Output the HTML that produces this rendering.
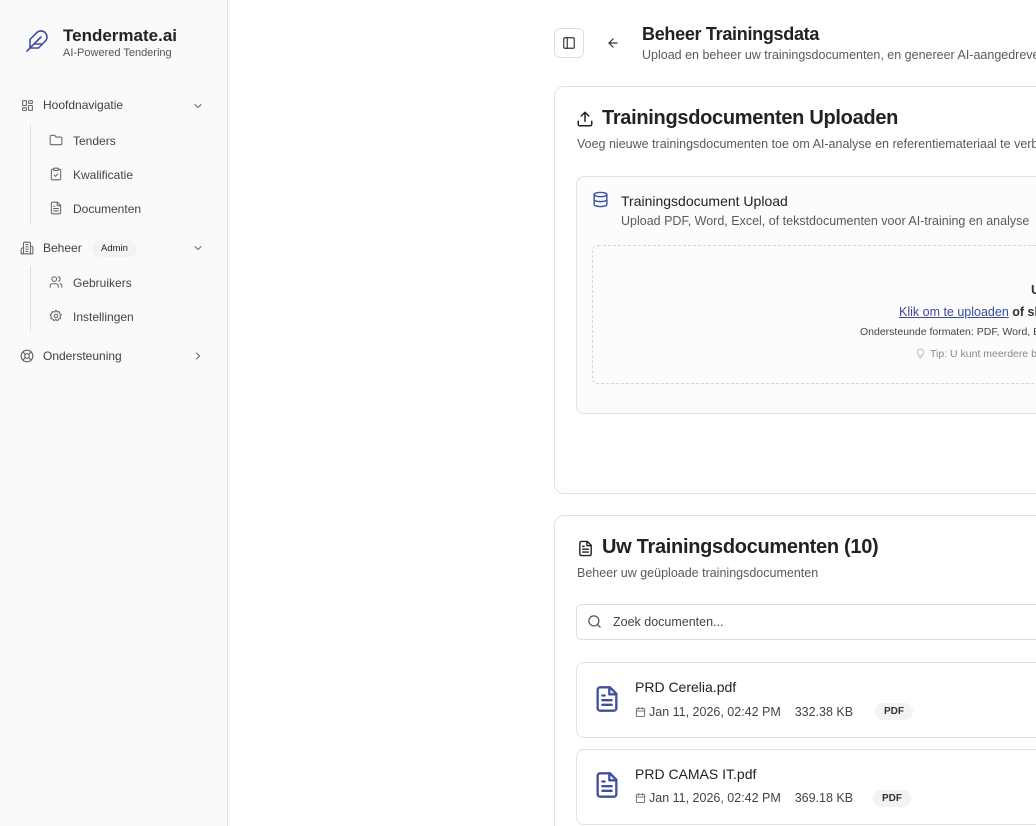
<!DOCTYPE html>
<html style="width:1036px;height:826px;overflow:hidden"><head><meta charset="utf-8"><style>
*{box-sizing:border-box;margin:0;padding:0}
body{width:1036px;height:826px;overflow:hidden;background:#fff;font-family:"Liberation Sans",sans-serif;color:#1f1f1f;position:relative}
.abs{position:absolute;white-space:nowrap}
.side{position:absolute;left:0;top:0;width:228px;height:826px;background:#fafafa;border-right:1px solid #e5e5e5}
.nav{font-size:12px;color:#3f3f3f}
.sub{font-size:12px;color:#444}
svg{position:absolute;fill:none;stroke-linecap:round;stroke-linejoin:round}
.card{position:absolute;border:1px solid #e2e2e2;border-radius:10px;background:#fff}
.muted{color:#5a5a5a}
.badge{position:absolute;background:#f3f3f3;border-radius:10px;font-size:10px;font-weight:bold;color:#333;padding:3px 9px}
</style></head><body>
<div class="side">
<svg style="left:25px;top:29px" width="24" height="24" viewBox="0 0 24 24" stroke="#4050a0" stroke-width="1.6"><path d="M20.2 12.2a6 6 0 0 0-8.5-8.5L5 10.5V19h8.5z"/><path d="M16 8 2 22"/><path d="M17.5 15H9"/></svg>
<div class="abs" style="left:63px;top:26px;font-size:17px;font-weight:bold;color:#222">Tendermate.ai</div>
<div class="abs" style="left:63px;top:47px;font-size:11px;color:#555">AI-Powered Tendering</div>

<svg style="left:21px;top:99px" width="13" height="13" viewBox="0 0 24 24" stroke="#666" stroke-width="2"><rect x="3" y="3" width="7" height="9" rx="1"/><rect x="14" y="3" width="7" height="5" rx="1"/><rect x="14" y="12" width="7" height="9" rx="1"/><rect x="3" y="16" width="7" height="5" rx="1"/></svg>
<div class="abs nav" style="left:43px;top:98px">Hoofdnavigatie</div>
<svg style="left:192px;top:100px" width="12" height="12" viewBox="0 0 24 24" stroke="#666" stroke-width="2"><path d="m6 9 6 6 6-6"/></svg>
<div style="position:absolute;left:30px;top:124px;width:1px;height:100px;background:#ddd"></div>
<svg style="left:49px;top:133px" width="14" height="14" viewBox="0 0 24 24" stroke="#666" stroke-width="1.8"><path d="M4 20h16a2 2 0 0 0 2-2V9a2 2 0 0 0-2-2h-8L10 4H4a2 2 0 0 0-2 2v12a2 2 0 0 0 2 2z"/></svg>
<div class="abs sub" style="left:73px;top:134px">Tenders</div>
<svg style="left:49px;top:167px" width="14" height="14" viewBox="0 0 24 24" stroke="#666" stroke-width="1.8"><rect x="8" y="2" width="8" height="4" rx="1"/><path d="M16 4h2a2 2 0 0 1 2 2v14a2 2 0 0 1-2 2H6a2 2 0 0 1-2-2V6a2 2 0 0 1 2-2h2"/><path d="m9 14 2 2 4-4"/></svg>
<div class="abs sub" style="left:73px;top:168px">Kwalificatie</div>
<svg style="left:49px;top:201px" width="14" height="14" viewBox="0 0 24 24" stroke="#666" stroke-width="1.8"><path d="M14.5 2H6a2 2 0 0 0-2 2v16a2 2 0 0 0 2 2h12a2 2 0 0 0 2-2V7.5z"/><path d="M14 2v6h6M16 13H8M16 17H8M10 9H8"/></svg>
<div class="abs sub" style="left:73px;top:202px">Documenten</div>

<svg style="left:20px;top:241px" width="14" height="14" viewBox="0 0 24 24" stroke="#666" stroke-width="1.8"><path d="M6 22V4a2 2 0 0 1 2-2h8a2 2 0 0 1 2 2v18z"/><path d="M6 12H4a2 2 0 0 0-2 2v8h4M18 9h2a2 2 0 0 1 2 2v11h-4M10 6h4M10 10h4M10 14h4M10 18h4"/></svg>
<div class="abs nav" style="left:43px;top:241px">Beheer</div>
<div class="badge" style="left:92px;top:240px;font-weight:normal;color:#222;font-size:9.5px">Admin</div>
<svg style="left:192px;top:242px" width="12" height="12" viewBox="0 0 24 24" stroke="#666" stroke-width="2"><path d="m6 9 6 6 6-6"/></svg>
<div style="position:absolute;left:30px;top:266px;width:1px;height:66px;background:#ddd"></div>
<svg style="left:49px;top:275px" width="14" height="14" viewBox="0 0 24 24" stroke="#666" stroke-width="1.8"><path d="M16 21v-2a4 4 0 0 0-4-4H6a4 4 0 0 0-4 4v2"/><circle cx="9" cy="7" r="4"/><path d="M22 21v-2a4 4 0 0 0-3-3.9M16 3.1a4 4 0 0 1 0 7.8"/></svg>
<div class="abs sub" style="left:73px;top:276px">Gebruikers</div>
<svg style="left:49px;top:309px" width="14" height="14" viewBox="0 0 24 24" stroke="#666" stroke-width="1.8"><circle cx="12" cy="12" r="3"/><path d="M12 2l2 3 3.5-.5.5 3.5 3 2-2 3 1 3.5-3.5.5-2 3-3-2-3 2-2-3-3.5-.5 1-3.5-2-3 3-2 .5-3.5L10 5z"/></svg>
<div class="abs sub" style="left:73px;top:310px">Instellingen</div>

<svg style="left:20px;top:349px" width="14" height="14" viewBox="0 0 24 24" stroke="#666" stroke-width="2"><circle cx="12" cy="12" r="10"/><circle cx="12" cy="12" r="4"/><path d="m4.9 4.9 4.3 4.3M14.8 14.8l4.3 4.3M14.8 9.2l4.3-4.3M4.9 19.1l4.3-4.3"/></svg>
<div class="abs nav" style="left:43px;top:349px">Ondersteuning</div>
<svg style="left:192px;top:350px" width="12" height="12" viewBox="0 0 24 24" stroke="#666" stroke-width="2"><path d="m9 6 6 6-6 6"/></svg>
</div>

<div style="position:absolute;left:554px;top:28px;width:30px;height:30px;border:1px solid #ddd;border-radius:6px"></div>
<svg style="left:562px;top:36px" width="14" height="14" viewBox="0 0 24 24" stroke="#333" stroke-width="2"><rect x="3" y="3" width="18" height="18" rx="2"/><path d="M9 3v18"/></svg>
<svg style="left:606px;top:36px" width="14" height="14" viewBox="0 0 24 24" stroke="#333" stroke-width="2"><path d="M19 12H5M12 19l-7-7 7-7"/></svg>
<div class="abs" style="left:642px;top:24px;font-size:18px;font-weight:bold;color:#222;letter-spacing:-0.3px">Beheer Trainingsdata</div>
<div class="abs muted" style="left:642px;top:48px;font-size:12.5px">Upload en beheer uw trainingsdocumenten, en genereer AI-aangedreven inzichten</div>

<div class="card" style="left:554px;top:86px;width:520px;height:408px"></div>
<svg style="left:576px;top:110px" width="18" height="18" viewBox="0 0 24 24" stroke="#222" stroke-width="2"><path d="M21 15v4a2 2 0 0 1-2 2H5a2 2 0 0 1-2-2v-4M17 8l-5-5-5 5M12 3v12"/></svg>
<div class="abs" style="left:602px;top:107px;font-size:20px;font-weight:bold;color:#222;letter-spacing:-0.3px">Trainingsdocumenten Uploaden</div>
<div class="abs muted" style="left:577px;top:137px;font-size:12.5px">Voeg nieuwe trainingsdocumenten toe om AI-analyse en referentiemateriaal te verbeteren</div>

<div class="card" style="left:576px;top:176px;width:500px;height:238px;background:#fcfcfc;border-radius:8px"></div>
<svg style="left:592px;top:191px" width="17" height="17" viewBox="0 0 24 24" stroke="#4050a0" stroke-width="2"><ellipse cx="12" cy="5" rx="9" ry="3"/><path d="M3 5v14c0 1.7 4 3 9 3s9-1.3 9-3V5M3 12c0 1.7 4 3 9 3s9-1.3 9-3"/></svg>
<div class="abs" style="left:621px;top:193px;font-size:14px;color:#222">Trainingsdocument Upload</div>
<div class="abs muted" style="left:621px;top:214px;font-size:12.5px">Upload PDF, Word, Excel, of tekstdocumenten voor AI-training en analyse</div>
<div style="position:absolute;left:592px;top:245px;width:480px;height:139px;border:1px dashed #d5d5d5;border-radius:6px"></div>
<div class="abs" style="left:1031px;top:282px;font-size:13px;font-weight:bold;color:#333">Upload</div>
<div class="abs" style="left:899px;top:305px;font-size:12.5px;color:#333"><span style="color:#3a4a9a;text-decoration:underline">Klik om te uploaden</span> <b>of sleep</b></div>
<div class="abs" style="left:860px;top:326px;font-size:10.5px;color:#444">Ondersteunde formaten: PDF, Word, Excel</div>
<svg style="left:915px;top:347px" width="11" height="13" viewBox="0 0 24 24" stroke="#bbb" stroke-width="2"><path d="M9 18h6M10 22h4M12 2a7 7 0 0 0-4 12.7V17h8v-2.3A7 7 0 0 0 12 2z"/></svg>
<div class="abs" style="left:930px;top:348px;font-size:10.5px;color:#888">Tip: U kunt meerdere bestanden</div>

<div class="card" style="left:554px;top:515px;width:520px;height:340px"></div>
<svg style="left:577px;top:540px" width="17" height="17" viewBox="0 0 24 24" stroke="#222" stroke-width="2"><path d="M14.5 2H6a2 2 0 0 0-2 2v16a2 2 0 0 0 2 2h12a2 2 0 0 0 2-2V7.5z"/><path d="M14 2v6h6M16 13H8M16 17H8M10 9H8"/></svg>
<div class="abs" style="left:602px;top:536px;font-size:20px;font-weight:bold;color:#222;letter-spacing:-0.3px">Uw Trainingsdocumenten (10)</div>
<div class="abs muted" style="left:577px;top:566px;font-size:12.5px">Beheer uw geüploade trainingsdocumenten</div>
<div style="position:absolute;left:576px;top:604px;width:500px;height:36px;border:1px solid #ddd;border-radius:6px"></div>
<svg style="left:587px;top:614px" width="15" height="15" viewBox="0 0 24 24" stroke="#555" stroke-width="2"><circle cx="11" cy="11" r="8"/><path d="m21 21-4.3-4.3"/></svg>
<div class="abs" style="left:613px;top:615px;font-size:12.5px;color:#444">Zoek documenten...</div>

<div class="card" style="left:576px;top:662px;width:500px;height:76px;border-radius:8px"></div>
<svg style="left:593px;top:685px" width="28" height="28" viewBox="0 0 24 24" stroke="#4050a0" stroke-width="2"><path d="M14.5 2H6a2 2 0 0 0-2 2v16a2 2 0 0 0 2 2h12a2 2 0 0 0 2-2V7.5z"/><path d="M14 2v6h6M16 13H8M16 17H8M10 9H8"/></svg>
<div class="abs" style="left:635px;top:679px;font-size:14px;color:#222">PRD Cerelia.pdf</div>
<svg style="left:635px;top:706px" width="11" height="12" viewBox="0 0 24 24" stroke="#666" stroke-width="2"><rect x="3" y="4" width="18" height="18" rx="2"/><path d="M16 2v4M8 2v4M3 10h18"/></svg>
<div class="abs" style="left:649px;top:705px;font-size:12.5px;color:#444">Jan 11, 2026, 02:42 PM &nbsp;&nbsp; 332.38 KB</div>
<div class="badge" style="left:875px;top:703px">PDF</div>

<div class="card" style="left:576px;top:749px;width:500px;height:76px;border-radius:8px"></div>
<svg style="left:593px;top:771px" width="28" height="28" viewBox="0 0 24 24" stroke="#4050a0" stroke-width="2"><path d="M14.5 2H6a2 2 0 0 0-2 2v16a2 2 0 0 0 2 2h12a2 2 0 0 0 2-2V7.5z"/><path d="M14 2v6h6M16 13H8M16 17H8M10 9H8"/></svg>
<div class="abs" style="left:635px;top:766px;font-size:14px;color:#222">PRD CAMAS IT.pdf</div>
<svg style="left:635px;top:792px" width="11" height="12" viewBox="0 0 24 24" stroke="#666" stroke-width="2"><rect x="3" y="4" width="18" height="18" rx="2"/><path d="M16 2v4M8 2v4M3 10h18"/></svg>
<div class="abs" style="left:649px;top:791px;font-size:12.5px;color:#444">Jan 11, 2026, 02:42 PM &nbsp;&nbsp; 369.18 KB</div>
<div class="badge" style="left:873px;top:790px">PDF</div>
</body></html>
